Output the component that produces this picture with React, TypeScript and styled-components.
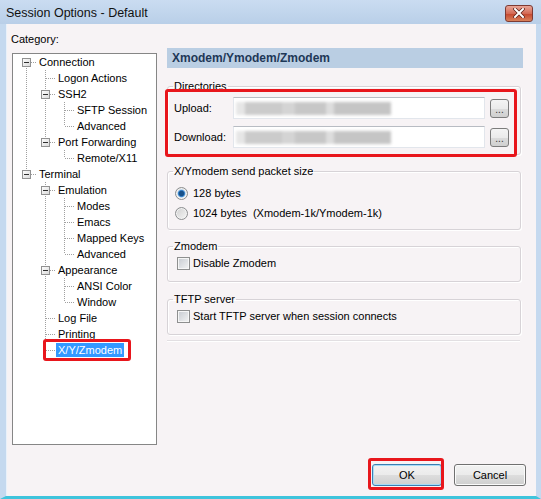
import styled, { createGlobalStyle } from 'styled-components';

type TreeNode = {
  label: string;
  children?: TreeNode[];
  selected?: boolean;
};

type TreeRowData = {
  label: string;
  depth: number;
  guides: boolean[];
  first: boolean;
  last: boolean;
  hasChildren: boolean;
  selected: boolean;
};

const categories: TreeNode[] = [
  {
    label: 'Connection',
    children: [
      { label: 'Logon Actions' },
      { label: 'SSH2', children: [{ label: 'SFTP Session' }, { label: 'Advanced' }] },
      { label: 'Port Forwarding', children: [{ label: 'Remote/X11' }] },
    ],
  },
  {
    label: 'Terminal',
    children: [
      {
        label: 'Emulation',
        children: [{ label: 'Modes' }, { label: 'Emacs' }, { label: 'Mapped Keys' }, { label: 'Advanced' }],
      },
      { label: 'Appearance', children: [{ label: 'ANSI Color' }, { label: 'Window' }] },
      { label: 'Log File' },
      { label: 'Printing' },
      { label: 'X/Y/Zmodem', selected: true },
    ],
  },
];

const flatten = (nodes: TreeNode[], depth = 0, guides: boolean[] = []): TreeRowData[] =>
  nodes.flatMap((node, i) => {
    const row: TreeRowData = {
      label: node.label,
      depth,
      guides,
      first: i === 0,
      last: i === nodes.length - 1,
      hasChildren: !!node.children,
      selected: !!node.selected,
    };
    const kids = node.children ? flatten(node.children, depth + 1, [...guides, i < nodes.length - 1]) : [];
    return [row, ...kids];
  });

const GlobalStyle = createGlobalStyle`
  body {
    margin: 0;
    background: #ffffff;
    font-family: "Liberation Sans", Arial, sans-serif;
    font-size: 11px;
    color: #000;
  }
`;

const Window = styled.div`
  width: 541px;
  height: 499px;
  display: flex;
  flex-direction: column;
  overflow: hidden;
`;

const TitleBar = styled.div`
  height: 24px;
  display: flex;
  align-items: center;
  background: linear-gradient(#cadcf1, #b9cfe8);
  padding-left: 6px;
`;

const Title = styled.div`
  flex: 1;
  font-size: 12.5px;
  color: #111;
  padding-top: 1px;
`;

const CloseButton = styled.div`
  width: 28px;
  height: 17px;
  margin-right: 8px;
  margin-top: 2px;
  border: 1px solid #7d3a33;
  border-radius: 3px;
  background: linear-gradient(#e8a597, #d46a55 50%, #c4452d 51%, #d9805a);
  display: flex;
  align-items: center;
  justify-content: center;
  box-sizing: border-box;
`;

const Frame = styled.div`
  flex: 1;
  display: flex;
  flex-direction: column;
  background: #f7f3f5;
  border-left: 6px solid #c5d9ef;
  border-right: 5px solid #c5d9ef;
  border-bottom: 3px solid #3fc4dc;
  box-shadow: inset 1px 0 0 #e9f1fa;
  padding: 7px 10px 10px 5px;
`;

const Main = styled.div`
  display: flex;
  flex: 1;
`;

const Sidebar = styled.div`
  width: 145px;
  display: flex;
  flex-direction: column;
  margin-left: 1px;
`;

const CategoryLabel = styled.div`
  line-height: 16px;
  margin-left: -1px;
  margin-bottom: 6px;
`;

const Tree = styled.div`
  height: 392px;
  box-sizing: border-box;
  background: #fff;
  border: 1px solid #868686;
  padding-left: 4px;
`;

const TreeRow = styled.div`
  display: flex;
  align-items: center;
  height: 16px;
  white-space: nowrap;
`;

const TreeLabel = styled.span<{ $selected: boolean }>`
  position: relative;
  line-height: 14px;
  margin-left: 1px;
  padding: 0 2px;
  background: ${p => (p.$selected ? '#3399ff' : 'transparent')};
  color: ${p => (p.$selected ? '#fff' : '#000')};

  ${p =>
    p.$selected &&
    `
    &::after {
      content: '';
      position: absolute;
      top: -4px;
      bottom: -4px;
      left: -13px;
      right: -7px;
      border: 3px solid #e8161c;
      border-radius: 3px;
    }
  `}
`;

const Panel = styled.div`
  flex: 1;
  margin: 17px 3px 0 10px;
  display: flex;
  flex-direction: column;
`;

const PanelHeader = styled.div`
  height: 20px;
  line-height: 20px;
  background: #bacee3;
  color: #1e3857;
  font-weight: bold;
  font-size: 12px;
  padding-left: 5px;
`;

const Group = styled.fieldset<{ $top: number; $marked?: boolean }>`
  position: relative;
  margin: ${p => p.$top}px 2px 0 0;
  padding: 4px 11px 6px 5px;
  border: 1px solid #d7d3d7;
  border-radius: 3px;
  box-shadow: inset 1px 1px 0 #fff, 1px 1px 0 #fff;
  min-width: 0;

  ${p =>
    p.$marked &&
    `
    &::after {
      content: '';
      position: absolute;
      top: -4px;
      bottom: -3px;
      left: -3px;
      right: 3px;
      border: 3px solid #e8161c;
      border-radius: 3px;
      pointer-events: none;
    }
  `}
`;

const Legend = styled.legend`
  padding: 0 1px;
  line-height: 14px;
`;

const GroupBody = styled.div<{ $shift: number; $padBottom: number }>`
  display: flex;
  flex-direction: column;
  gap: 7px;
  margin-top: ${p => p.$shift}px;
  padding-bottom: ${p => p.$padBottom}px;
`;

const OptionList = styled.div<{ $shift: number; $padBottom: number }>`
  display: flex;
  flex-direction: column;
  margin-top: ${p => p.$shift}px;
  padding-bottom: ${p => p.$padBottom}px;
`;

const PathRow = styled.div`
  display: flex;
  align-items: center;
  height: 22px;
`;

const PathLabel = styled.span`
  width: 59px;
  margin-left: 1px;
`;

const PathField = styled.div`
  flex: 1;
  height: 22px;
  box-sizing: border-box;
  background: #fff;
  border: 1px solid #e2e6ec;
  border-top-color: #b8bcc3;
  display: flex;
  align-items: center;
`;

const Redacted = styled.div`
  width: 155px;
  height: 13px;
  margin-left: 2px;
  background: linear-gradient(
    90deg,
    #e6e6e6 0 6%,
    #cbcbcb 6% 30%,
    #d4d4d4 30% 38%,
    #c7c7c7 38% 58%,
    #dddddd 58% 63%,
    #c5c5c5 63% 100%
  );
  filter: blur(1.6px);
`;

const BrowseButton = styled.div`
  width: 19px;
  height: 19px;
  margin-left: 5px;
  box-sizing: border-box;
  border: 1px solid #7c7c7c;
  border-radius: 3px;
  background: linear-gradient(#f4f4f4, #ebebeb 50%, #dcdcdc 51%, #d0d0d0);
  font-size: 10px;
  line-height: 19px;
  text-align: center;
  color: #333;
`;

const OptionRow = styled.label`
  display: flex;
  align-items: center;
  height: 20px;
`;

const Radio = styled.span<{ $checked?: boolean }>`
  width: 11px;
  height: 11px;
  margin: 0 5px 0 2px;
  border-radius: 50%;
  border: 1px solid #8b8d8f;
  background: ${p =>
    p.$checked
      ? 'radial-gradient(circle, #17508a 0 2.2px, #3f8ad0 3.2px, #b9d5ee 4px, transparent 4.5px), linear-gradient(#d4d4d4, #f8f8f8)'
      : 'linear-gradient(135deg, #cfcfcf, #f6f6f6)'};
  box-shadow: inset 0 0 0 1px #f3f3f3;
`;

const Checkbox = styled.span`
  width: 11px;
  height: 11px;
  margin: 0 3px 0 4px;
  border: 1px solid #8e8f8f;
  background: linear-gradient(135deg, #c6cad0, #f4f4f4);
  box-shadow: inset 0 0 0 1px #f6f6f6;
`;

const Separator = styled.div`
  margin: 5px 3px 0 0;
  height: 1px;
  background: #e2dfe2;
  border-bottom: 1px solid #fff;
`;

const ButtonRow = styled.div`
  display: flex;
  justify-content: flex-end;
  gap: 12px;
`;

const DialogButton = styled.div<{ $width: number; $marked?: boolean; $default?: boolean }>`
  position: relative;
  width: ${p => p.$width}px;
  height: 22px;
  box-sizing: border-box;
  border: 1px solid ${p => (p.$default ? '#3c7fb1' : '#707070')};
  border-radius: 3px;
  background: linear-gradient(#f2f2f2, #ebebeb 50%, #dddddd 51%, #cfcfcf);
  box-shadow: inset 0 0 0 1px ${p => (p.$default ? '#a6dcf7' : '#fbfbfb')};
  line-height: 20px;
  text-align: center;

  ${p =>
    p.$marked &&
    `
    &::after {
      content: '';
      position: absolute;
      top: -7px;
      bottom: -5px;
      left: -5px;
      right: -3px;
      border: 3px solid #e8161c;
      border-radius: 3px;
    }
  `}
`;

const TreeCell = ({ row, col }: { row: TreeRowData; col: number }) => {
  const dot = { stroke: '#a0a0a0', strokeDasharray: '1 1' };
  if (col < row.depth) {
    return (
      <svg width="19" height="16">
        {row.guides[col] && <line x1="9.5" y1="0" x2="9.5" y2="16" {...dot} />}
      </svg>
    );
  }
  const top = row.depth === 0 && row.first ? 8 : 0;
  const bottom = row.last ? 8 : 16;
  return (
    <svg width="19" height="16">
      <line x1="9.5" y1={top} x2="9.5" y2={bottom} {...dot} />
      <line x1="10" y1="8.5" x2="19" y2="8.5" {...dot} />
      {row.hasChildren && (
        <>
          <defs>
            <linearGradient id="exp" x1="0" y1="0" x2="1" y2="1">
              <stop offset="0" stopColor="#ffffff" />
              <stop offset="1" stopColor="#d8d8d8" />
            </linearGradient>
          </defs>
          <rect x="5.5" y="4.5" width="8" height="8" fill="url(#exp)" stroke="#919191" />
          <line x1="7" y1="8.5" x2="12" y2="8.5" stroke="#2f2f2f" />
        </>
      )}
    </svg>
  );
};

const CloseGlyph = () => (
  <svg width="12" height="10" viewBox="0 0 12 10">
    <path d="M2 1 L10 9 M10 1 L2 9" stroke="#5a1f18" strokeWidth="3.4" strokeLinecap="square" />
    <path d="M2 1 L10 9 M10 1 L2 9" stroke="#ffffff" strokeWidth="2" strokeLinecap="square" />
  </svg>
);

export default function App() {
  const rows = flatten(categories);
  return (
    <>
      <GlobalStyle />
      <Window>
        <TitleBar>
          <Title>Session Options - Default</Title>
          <CloseButton>
            <CloseGlyph />
          </CloseButton>
        </TitleBar>
        <Frame>
          <Main>
            <Sidebar>
              <CategoryLabel>Category:</CategoryLabel>
              <Tree>
                {rows.map((row, i) => (
                  <TreeRow key={i}>
                    {Array.from({ length: row.depth + 1 }, (_, c) => (
                      <TreeCell key={c} row={row} col={c} />
                    ))}
                    <TreeLabel $selected={row.selected}>{row.label}</TreeLabel>
                  </TreeRow>
                ))}
              </Tree>
            </Sidebar>
            <Panel>
              <PanelHeader>Xmodem/Ymodem/Zmodem</PanelHeader>

              <Group $top={11} $marked>
                <Legend>Directories</Legend>
                <GroupBody $shift={0} $padBottom={0}>
                  <PathRow>
                    <PathLabel>Upload:</PathLabel>
                    <PathField>
                      <Redacted />
                    </PathField>
                    <BrowseButton>...</BrowseButton>
                  </PathRow>
                  <PathRow>
                    <PathLabel>Download:</PathLabel>
                    <PathField>
                      <Redacted />
                    </PathField>
                    <BrowseButton>...</BrowseButton>
                  </PathRow>
                </GroupBody>
              </Group>

              <Group $top={9}>
                <Legend>X/Ymodem send packet size</Legend>
                <OptionList $shift={1} $padBottom={0}>
                  <OptionRow>
                    <Radio $checked />
                    128 bytes
                  </OptionRow>
                  <OptionRow>
                    <Radio />
                    1024 bytes&nbsp; (Xmodem-1k/Ymodem-1k)
                  </OptionRow>
                </OptionList>
              </Group>

              <Group $top={9}>
                <Legend>Zmodem</Legend>
                <OptionList $shift={-4} $padBottom={2}>
                  <OptionRow>
                    <Checkbox />
                    Disable Zmodem
                  </OptionRow>
                </OptionList>
              </Group>

              <Group $top={10}>
                <Legend>TFTP server</Legend>
                <OptionList $shift={-4} $padBottom={2}>
                  <OptionRow>
                    <Checkbox />
                    Start TFTP server when session connects
                  </OptionRow>
                </OptionList>
              </Group>

              <Separator />
            </Panel>
          </Main>
          <ButtonRow>
            <DialogButton $width={70} $marked $default>
              OK
            </DialogButton>
            <DialogButton $width={72}>Cancel</DialogButton>
          </ButtonRow>
        </Frame>
      </Window>
    </>
  );
}
